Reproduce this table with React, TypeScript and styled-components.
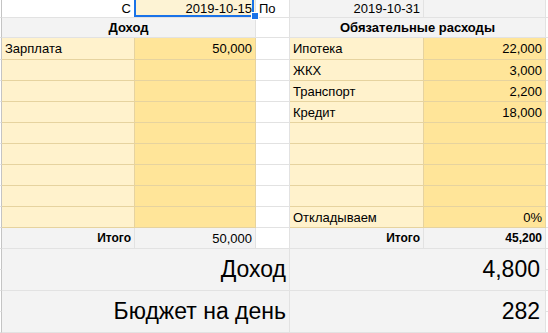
import React from 'react';
import styled, { createGlobalStyle } from 'styled-components';

const GlobalStyle = createGlobalStyle`
  html, body {
    margin: 0;
    padding: 0;
    background: #fff;
  }
  body {
    font-family: "Liberation Sans", Arial, sans-serif;
    overflow: hidden;
  }
`;

const palette = {
  grid: '#e2e2e2',
  tan: '#e6d39f',
  light: '#fff2cc',
  gold: '#ffe599',
  gray: '#f3f3f3',
  blue: '#1a73e8',
};

const Sheet = styled.div`
  position: relative;
  display: grid;
  grid-template-columns: 2px 133px 121px 34px 134px 122px 2px;
  grid-template-rows: 18px 20px 22px repeat(13, 21px);
  width: 548px;
  font-size: 13px;
  color: #000;
`;

type CellProps = {
  $bg?: string;
  $line?: string;
  $align?: 'left' | 'center' | 'right';
  $bold?: boolean;
  $size?: number;
  $span?: number;
  $rows?: number;
  $pad?: number;
};

const Cell = styled.div<CellProps>`
  box-sizing: border-box;
  display: flex;
  align-items: center;
  justify-content: ${(p) =>
    p.$align === 'right' ? 'flex-end' : p.$align === 'center' ? 'center' : 'flex-start'};
  padding: 0 ${(p) => p.$pad ?? 3}px;
  overflow: hidden;
  white-space: nowrap;
  grid-column: span ${(p) => p.$span ?? 1};
  grid-row: span ${(p) => p.$rows ?? 1};
  background: ${(p) => p.$bg ?? '#fff'};
  border-right: 1px solid ${(p) => p.$line ?? palette.grid};
  border-bottom: 1px solid ${(p) => p.$line ?? palette.grid};
  font-weight: ${(p) => (p.$bold ? 700 : 400)};
  font-size: ${(p) => p.$size ?? 13}px;
`;

// thin slivers of the neighbouring columns at both sides
const Edge = styled.div`
  box-sizing: border-box;
  border-right: 1px solid #c4c4c4;
  border-bottom: 1px solid ${palette.grid};
`;

const Tail = styled.div`
  box-sizing: border-box;
  border-bottom: 1px solid ${palette.grid};
`;

const Selection = styled.div`
  position: absolute;
  left: 134px;
  top: -2px;
  width: 120px;
  height: 19px;
  box-sizing: border-box;
  border: 2px solid ${palette.blue};
  pointer-events: none;
`;

const Handle = styled.div`
  position: absolute;
  left: 251px;
  top: 12px;
  width: 8px;
  height: 8px;
  box-sizing: border-box;
  background: ${palette.blue};
  border: 1px solid #fff;
`;

type Entry = [string, string];

const income: Entry[] = [
  ['Зарплата', '50,000'],
  ['', ''],
  ['', ''],
  ['', ''],
  ['', ''],
  ['', ''],
  ['', ''],
  ['', ''],
  ['', ''],
];

const expenses: Entry[] = [
  ['Ипотека', '22,000'],
  ['ЖКХ', '3,000'],
  ['Транспорт', '2,200'],
  ['Кредит', '18,000'],
  ['', ''],
  ['', ''],
  ['', ''],
  ['', ''],
  ['Откладываем', '0%'],
];

const Budget = () => (
  <Sheet>
    {/* period */}
    <Edge />
    <Cell $align="right">С</Cell>
    <Cell $align="right" $bg="#fdf3d4">2019-10-15</Cell>
    <Cell>По</Cell>
    <Cell $align="right" $bg={palette.gray}>2019-10-31</Cell>
    <Cell $bg={palette.gray} />
    <Tail />

    {/* section titles */}
    <Edge />
    <Cell $span={2} $align="center" $bold $bg={palette.gray}>Доход</Cell>
    <Cell />
    <Cell $span={2} $align="center" $bold $bg={palette.gray}>Обязательные расходы</Cell>
    <Tail />

    {income.map(([inName, inSum], i) => {
      const [outName, outSum] = expenses[i];
      return (
        <React.Fragment key={i}>
          <Edge />
          <Cell $bg={palette.light} $line={palette.tan}>{inName}</Cell>
          <Cell $bg={palette.gold} $line={palette.tan} $align="right">{inSum}</Cell>
          <Cell />
          <Cell $bg={palette.light} $line={palette.tan}>{outName}</Cell>
          <Cell $bg={palette.gold} $line={palette.tan} $align="right">{outSum}</Cell>
          <Tail />
        </React.Fragment>
      );
    })}

    {/* totals */}
    <Edge />
    <Cell $bg={palette.gray} $align="right" $bold $size={12}>Итого</Cell>
    <Cell $bg={palette.gray} $align="right">50,000</Cell>
    <Cell />
    <Cell $bg={palette.gray} $align="right" $bold $size={12}>Итого</Cell>
    <Cell $bg={palette.gray} $align="right" $bold $size={12}>45,200</Cell>
    <Tail />

    {/* summary */}
    <Edge />
    <Cell $span={3} $rows={2} $bg={palette.gray} $align="right" $size={23} $pad={3}>Доход</Cell>
    <Cell $span={2} $rows={2} $bg={palette.gray} $align="right" $size={23} $pad={5}>4,800</Cell>
    <Tail />
    <Edge />
    <Tail />

    <Edge />
    <Cell $span={3} $rows={2} $bg={palette.gray} $align="right" $size={23} $pad={3}>Бюджет на день</Cell>
    <Cell $span={2} $rows={2} $bg={palette.gray} $align="right" $size={23} $pad={5}>282</Cell>
    <Tail />
    <Edge />
    <Tail />

    <Selection />
    <Handle />
  </Sheet>
);

export default function App() {
  return (
    <>
      <GlobalStyle />
      <Budget />
    </>
  );
}
